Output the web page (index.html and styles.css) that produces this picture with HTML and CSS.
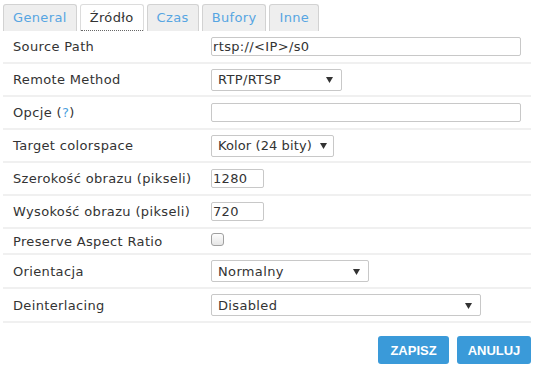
FILE: index.html
```html
<!DOCTYPE html>
<html lang="pl">
<head>
<meta charset="utf-8">
<title>Źródło</title>
<link rel="stylesheet" href="styles.css">
</head>
<body>
<div class="page">
  <ul class="tabs">
    <li class="tab"><a href="#">General</a></li>
    <li class="tab active"><a href="#">Źródło</a></li>
    <li class="tab"><a href="#">Czas</a></li>
    <li class="tab"><a href="#">Bufory</a></li>
    <li class="tab"><a href="#">Inne</a></li>
  </ul>
  <div class="form">
    <div class="row">
      <div class="label">Source Path</div>
      <div class="control"><div class="input w-full">rtsp://&lt;IP&gt;/s0</div></div>
    </div>
    <div class="row">
      <div class="label">Remote Method</div>
      <div class="control"><div class="select w-rtp"><span>RTP/RTSP</span><svg class="arrow" width="7" height="6" viewBox="0 0 7 6"><path d="M0 0H7L3.5 6Z" fill="#333"/></svg></div></div>
    </div>
    <div class="row">
      <div class="label">Opcje (<a class="help" href="#">?</a>)</div>
      <div class="control"><div class="input w-full"></div></div>
    </div>
    <div class="row">
      <div class="label">Target colorspace</div>
      <div class="control"><div class="select w-kolor"><span>Kolor (24 bity)</span><svg class="arrow" width="7" height="6" viewBox="0 0 7 6"><path d="M0 0H7L3.5 6Z" fill="#333"/></svg></div></div>
    </div>
    <div class="row">
      <div class="label">Szerokość obrazu (pikseli)</div>
      <div class="control"><div class="input w-num">1280</div></div>
    </div>
    <div class="row">
      <div class="label">Wysokość obrazu (pikseli)</div>
      <div class="control"><div class="input w-num">720</div></div>
    </div>
    <div class="row short">
      <div class="label">Preserve Aspect Ratio</div>
      <div class="control"><span class="checkbox"></span></div>
    </div>
    <div class="row tall">
      <div class="label">Orientacja</div>
      <div class="control"><div class="select w-orient"><span>Normalny</span><svg class="arrow" width="7" height="6" viewBox="0 0 7 6"><path d="M0 0H7L3.5 6Z" fill="#333"/></svg></div></div>
    </div>
    <div class="row tall">
      <div class="label">Deinterlacing</div>
      <div class="control"><div class="select w-deint"><span>Disabled</span><svg class="arrow" width="7" height="6" viewBox="0 0 7 6"><path d="M0 0H7L3.5 6Z" fill="#333"/></svg></div></div>
    </div>
  </div>
  <div class="actions">
    <button class="btn btn-save">ZAPISZ</button>
    <button class="btn btn-cancel">ANULUJ</button>
  </div>
</div>
</body>
</html>
```
FILE: styles.css
```css
html, body {
  margin: 0;
  padding: 0;
  background: #fff;
}
body {
  font-family: "DejaVu Sans", Verdana, sans-serif;
  font-size: 13px;
  letter-spacing: 0.35px;
  color: #333;
}
.page {
  width: 540px;
}
.tabs {
  list-style: none;
  margin: 4px 0 0 3px;
  padding: 0;
  display: flex;
  gap: 3px;
}
.tab {
  height: 26px;
  border: 1px solid #d2d2d2;
  border-bottom: none;
  border-radius: 3px 3px 0 0;
  background: #eeeeee;
}
.tab a {
  display: block;
  padding: 0 9px;
  line-height: 26px;
  color: #56a5e2;
  text-decoration: none;
}
.tab.active {
  background: #fff;
  border-color: #dcdcdc;
}
.tab.active a {
  color: #333;
  padding: 0 9px;
  line-height: 25px;
  border-bottom: 1px dotted #666;
}
.form {
  margin: 0 9px 0 3px;
}
.row {
  display: flex;
  align-items: center;
  height: 31px;
  border-bottom: 2px solid #f0f0f0;
}
.row.short {
  height: 24px;
}
.row.tall {
  height: 32px;
}
.label {
  width: 198px;
  padding-left: 10px;
  flex: none;
  white-space: nowrap;
}
.help {
  color: #4a9fe0;
  text-decoration: none;
}
.control {
  display: flex;
  align-items: center;
}
.input {
  box-sizing: border-box;
  height: 19px;
  border: 1px solid #c8c8c8;
  border-radius: 2px;
  padding: 0 1px;
  line-height: 17px;
  color: #333;
  white-space: nowrap;
}
.w-full { width: 310px; }
.w-num { width: 53px; }
.select {
  box-sizing: border-box;
  height: 22px;
  border: 1px solid #c8c8c8;
  border-radius: 2px;
  padding: 0 8px 0 6px;
  display: flex;
  align-items: center;
  justify-content: space-between;
  color: #333;
  white-space: nowrap;
}
.arrow {
  flex: none;
  margin-top: 1px;
}
.w-rtp { width: 131px; }
.w-kolor { width: 123px; padding-right: 6px; letter-spacing: 0.1px; }
.w-orient { width: 158px; }
.w-deint { width: 270px; }
.checkbox {
  display: block;
  box-sizing: border-box;
  width: 13px;
  height: 13px;
  border: 1px solid #a0a0a0;
  border-radius: 3px;
  background: linear-gradient(#fdfdfd, #e6e6e6);
  margin-top: -4px;
}
.actions {
  display: flex;
  justify-content: flex-end;
  gap: 8px;
  margin: 13px 9px 0 0;
}
.btn {
  height: 28px;
  border: none;
  border-radius: 3px;
  background: #3a9ad9;
  color: #fff;
  font-family: "Liberation Sans", Arial, sans-serif;
  font-weight: bold;
  font-size: 13px;
  letter-spacing: 0;
  padding: 0;
  text-align: center;
}
.btn-save { width: 71px; }
.btn-cancel { width: 74px; }
```
